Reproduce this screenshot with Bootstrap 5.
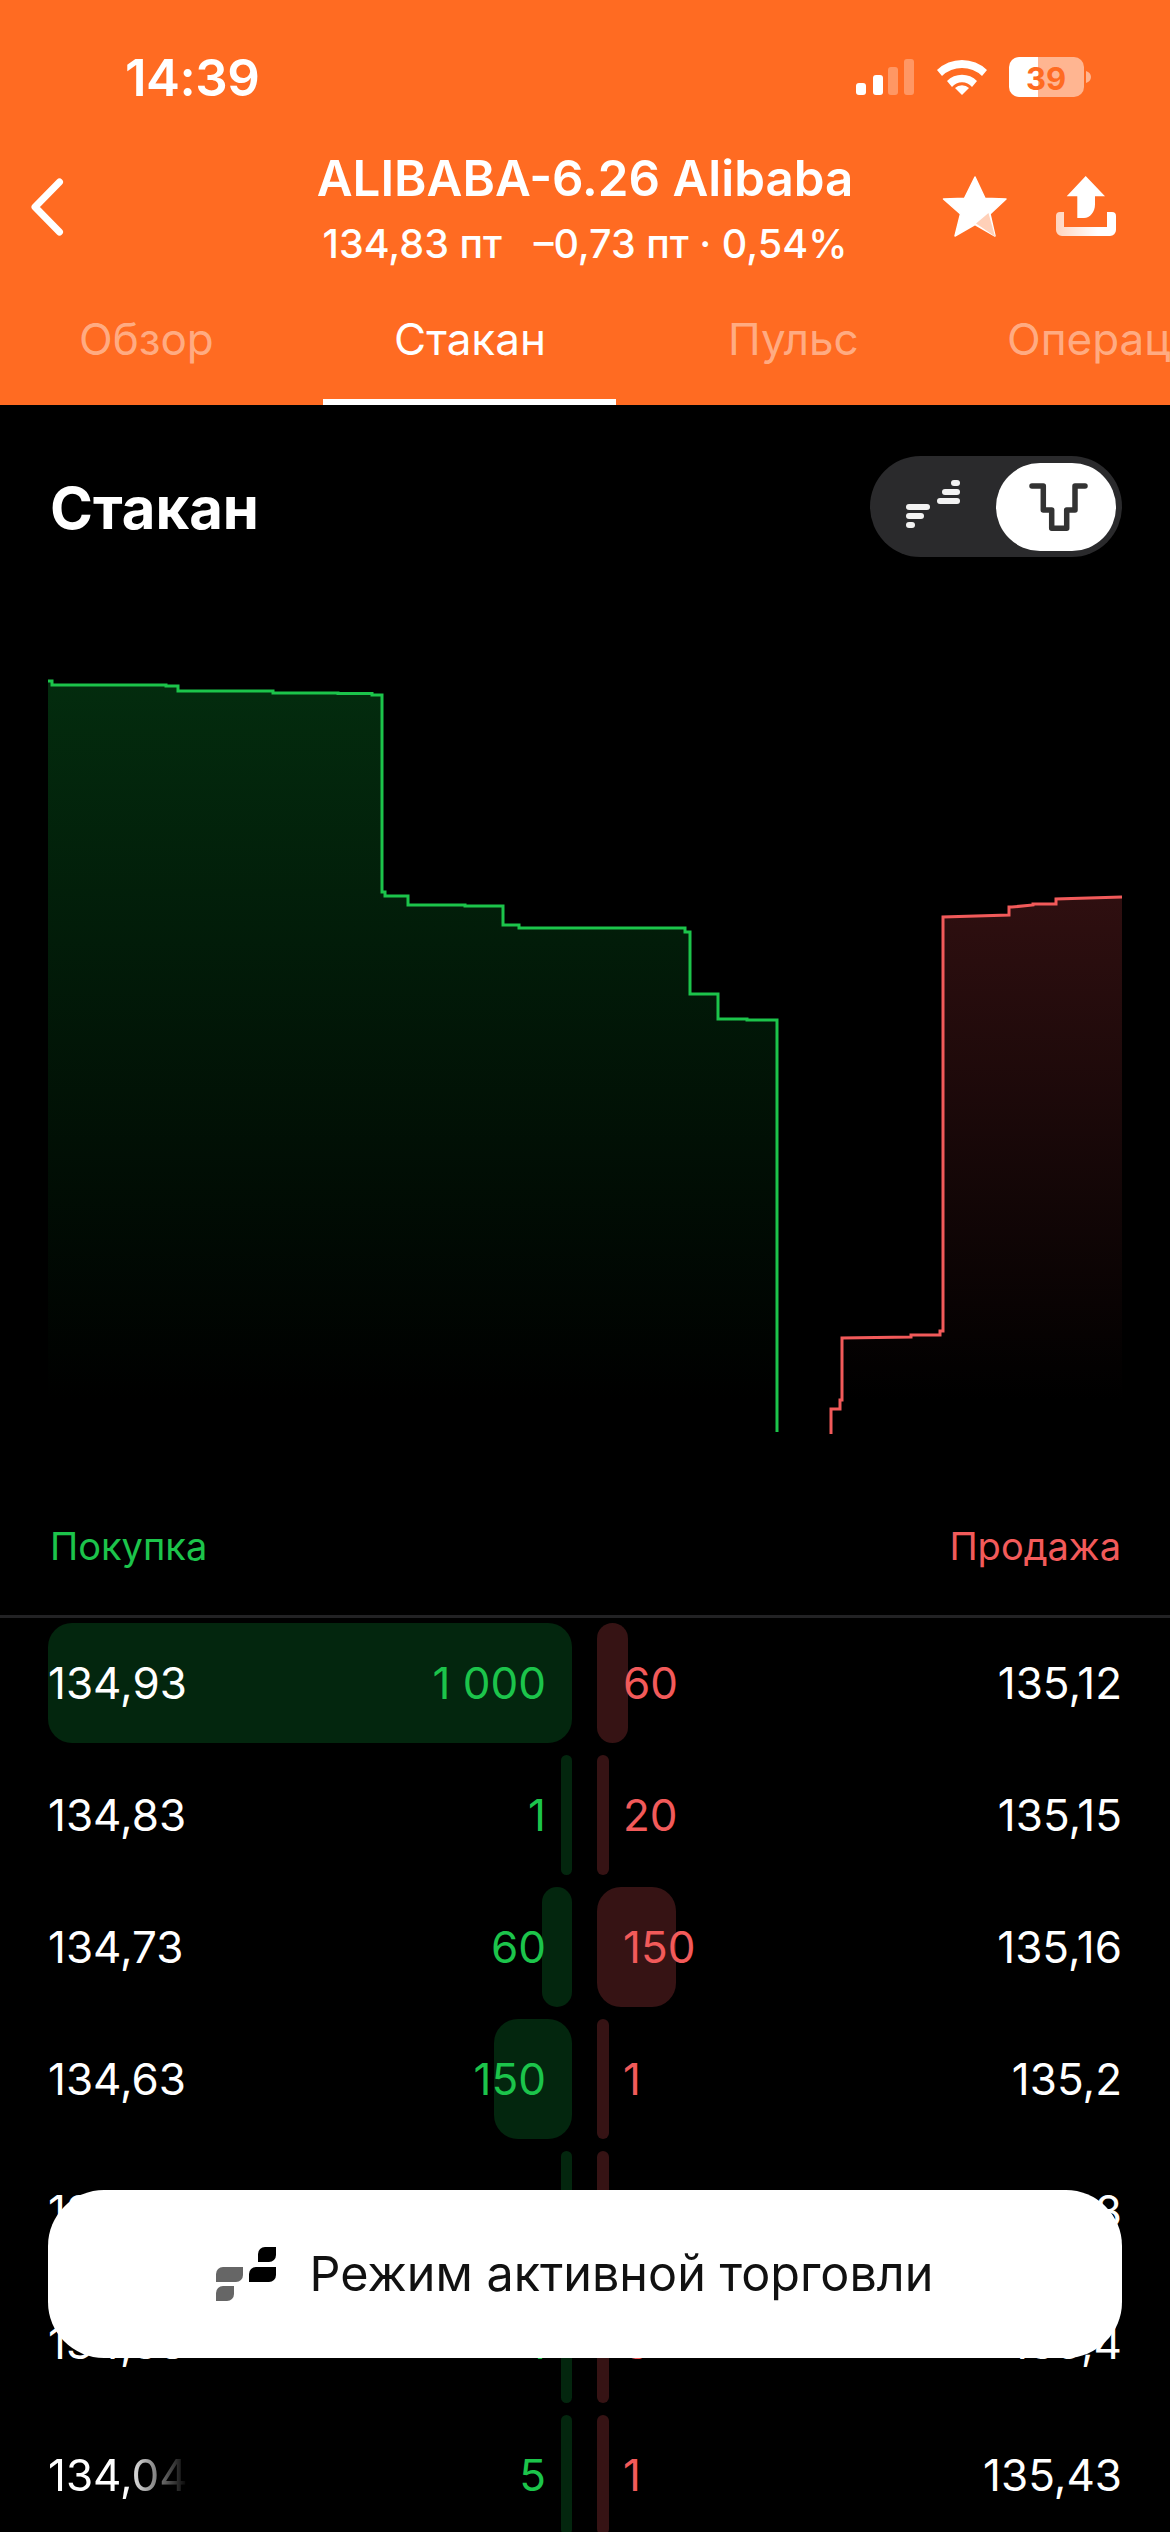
<!DOCTYPE html>
<html lang="ru">
<head>
  <meta charset="UTF-8" />
  <meta name="viewport" content="width=device-width, initial-scale=1.0" />
  <title>Стакан</title>
  <link href="https://cdn.jsdelivr.net/npm/bootstrap@5.3.3/dist/css/bootstrap.min.css" rel="stylesheet" />
  <style>
    html, body { background: #000; }
    body {
      width: 1170px;
      height: 2532px;
      overflow: hidden;
      position: relative;
      font-family: Inter, "Liberation Sans", sans-serif;
      color: #fff;
    }
    .top-head { background: #ff6b22; height: 405px; }
    .status-line { height: 150px; padding: 50px 70px 0 125px; }
    .clock { font-size: 51px; font-weight: 600; line-height: 56px; letter-spacing: -.5px; }
    .title-line { height: 163px; position: relative; }
    .ticker { font-size: 49.3px; font-weight: 600; line-height: 56px; white-space: nowrap; }
    .ticker-sub { font-size: 39.5px; font-weight: 500; line-height: 48px; margin-top: 14px; white-space: pre; }
    .back-ico { position: absolute; left: 28px; top: 20px; }
    .head-ico { position: absolute; top: 24px; }
    .tab-strip { flex-wrap: nowrap; overflow: hidden; height: 92px; position: relative; }
    .tab-strip .nav-link {
      position: absolute; top: 0; padding: 0;
      font-size: 44px; line-height: 52px;
      color: rgba(255, 255, 255, .45);
      white-space: nowrap;
    }
    .tab-strip .nav-link.active { color: #fff; }
    .tab-line { position: absolute; left: 323px; width: 293px; height: 6px; bottom: 0; background: #fff; }
    .depth-head { height: 152px; padding: 51px 48px 0 50px; }
    .depth-title { font-size: 58px; font-weight: 700; line-height: 62px; margin: 21px 0 0; }
    .mode-switch { width: 252px; height: 101px; background: #2a2a2c; border-radius: 51px; }
    .mode-on { position: absolute; left: 126px; top: 7px; width: 120px; height: 88px; background: #fff; border-radius: 44px; }
    .depth-chart { display: block; }
    .side-labels { padding: 0 49px 0 50px; font-size: 38px; line-height: 46px; margin-top: 83px; }
    .buy-txt { color: #1cc44b; }
    .sell-txt { color: #f25a5a; }
    .book-sep { height: 3px; background: #222224; margin-top: 46px; }
    .book { padding-top: 5px; }
    .book-row { height: 120px; margin-bottom: 12px; font-size: 44px; padding-left: 48px; gap: 25px; }
    .book-cell { position: relative; width: 524px; }
    .book-cell span { position: relative; }
    .cell-sell { width: 525px; }
    .bar-buy, .bar-sell { position: absolute; top: 0; bottom: 0; border-radius: 24px; }
    .bar-buy { right: 0; background: #03260e; }
    .bar-sell { left: 0; background: #361314; }
    .qty-buy { padding-right: 26px; }
    .qty-sell { padding-left: 26px; }
    .book-cell .fade-out {
      -webkit-mask-image: linear-gradient(90deg, #000 55%, transparent 100%);
      mask-image: linear-gradient(90deg, #000 55%, transparent 100%);
    }
    .trade-btn {
      position: absolute; left: 48px; top: 2190px;
      width: 1074px; height: 168px;
      padding: 0 21px 0 0;
      background: #fff; color: #111;
      border: 0; border-radius: 56px;
      font-size: 48.5px; line-height: 1;
      gap: 34px;
    }
  </style>
</head>
<body>
  <header class="top-head">
    <div class="status-line d-flex justify-content-between align-items-start">
      <div class="clock">14:39</div>
      <svg width="250" height="55" viewBox="850 50 250 55">
        <g fill="#fff">
          <rect x="856" y="83" width="10" height="12" rx="3"/>
          <rect x="873" y="75" width="10" height="20" rx="3"/>
          <rect x="888" y="67" width="10" height="28" rx="3" opacity=".3"/>
          <rect x="904" y="59" width="10" height="36" rx="3" opacity=".3"/>
          <path d="M937 70a36 36 0 0 1 50 0l-5 6a29 29 0 0 0-40 0z"/>
          <path d="M947 81a21 21 0 0 1 30 0l-5 6a13 13 0 0 0-20 0z"/>
          <path d="M962 95l-7-7a10 10 0 0 1 14 0z"/>
          <path d="M1019 57h19v40h-19a10 10 0 0 1-10-10V67a10 10 0 0 1 10-10z"/>
          <path d="M1038 57h36a10 10 0 0 1 10 10v20a10 10 0 0 1-10 10h-36z" opacity=".5"/>
          <path d="M1086 71c3 1 5 3 5 6s-2 5-5 6z" opacity=".5"/>
        </g>
        <text x="1046" y="90" text-anchor="middle" font-family="Inter, sans-serif" font-size="31" font-weight="700" fill="#ff6b22">39</text>
      </svg>
    </div>
    <div class="title-line text-center">
      <svg class="back-ico" width="40" height="74" viewBox="0 0 40 74" fill="none" stroke="#fff" stroke-width="7" stroke-linecap="round" stroke-linejoin="round">
        <path d="M31.5 12 7 37l24.5 25"/>
      </svg>
      <div class="ticker">ALIBABA-6.26 Alibaba</div>
      <div class="ticker-sub">134,83 пт   –0,73 пт · 0,54%</div>
      <svg class="head-ico" style="left:940px" width="70" height="66" viewBox="940 174 70 66">
        <path fill="#fff" stroke="#fff" stroke-width="1.5" stroke-linejoin="round" d="M975 177l10 21.3 21 .7-16 15 5 22-20-11.500-20 11.500 5.500-22-17-15 21-.7z"/>
        <path fill="#ffd0b8" d="M976 223.500 988.500 213 995 236.500z"/>
      </svg>
      <svg class="head-ico" style="left:1054px" width="64" height="64" viewBox="1054 172 64 64">
        <defs>
          <linearGradient id="trayFill" x1="0" x2="1" y1="0" y2="0">
            <stop offset="0" stop-color="#ffd4be"/><stop offset=".7" stop-color="#fff"/>
          </linearGradient>
        </defs>
        <path fill="#fff" d="M1085.700 174l19.300 20.300h-10v8c0 8-5 13.700-11 13.700h-6.700v-21.700h-10.600z"/>
        <path fill="url(#trayFill)" d="M1056 214a4 4 0 0 1 4-4h4v15h43v-15h5a4 4 0 0 1 4 4v14a6 6 0 0 1-6 6h-48a6 6 0 0 1-6-6z"/>
      </svg>
    </div>
    <nav class="nav tab-strip">
      <a class="nav-link" style="left:79px" href="#">Обзор</a>
      <a class="nav-link active" style="left:394px" href="#">Стакан</a>
      <a class="nav-link" style="left:728px" href="#">Пульс</a>
      <a class="nav-link" style="left:1007px" href="#">Операции</a>
      <div class="tab-line"></div>
    </nav>
  </header>

  <main>
    <div class="depth-head d-flex justify-content-between align-items-start">
      <h1 class="depth-title">Стакан</h1>
      <div class="mode-switch position-relative">
        <svg class="position-absolute" style="left:36px;top:20px" width="56" height="56" viewBox="0 0 56 56" fill="#f2f2f2">
          <rect x="45" y="4" width="9" height="6" rx="3"/>
          <rect x="36" y="13" width="18" height="6" rx="3"/>
          <rect x="31" y="22" width="23" height="6" rx="3"/>
          <rect x="0" y="28" width="24" height="6" rx="3"/>
          <rect x="0" y="37" width="18" height="6" rx="3"/>
          <rect x="0" y="46" width="9" height="6" rx="3"/>
        </svg>
        <div class="mode-on">
          <svg class="position-absolute top-0 start-0" width="120" height="88" viewBox="0 0 120 88" fill="none" stroke="#333" stroke-width="5.500" stroke-linecap="round" stroke-linejoin="round">
            <path d="M36 23h11.300v24h8.400v18.300h15V47H79V23h10"/>
          </svg>
        </div>
      </div>
    </div>

    <svg class="depth-chart" width="1170" height="883" viewBox="0 0 1170 883" id="chart"></svg>

    <div class="side-labels d-flex justify-content-between">
      <span class="buy-txt">Покупка</span>
      <span class="sell-txt">Продажа</span>
    </div>
    <div class="book-sep"></div>

    <div class="book">
      <div class="book-row d-flex">
        <div class="book-cell d-flex justify-content-between align-items-center">
          <div class="bar-buy" style="width:524px"></div>
          <span>134,93</span><span class="buy-txt qty-buy">1 000</span>
        </div>
        <div class="book-cell cell-sell d-flex justify-content-between align-items-center">
          <div class="bar-sell" style="width:31px"></div>
          <span class="sell-txt qty-sell">60</span><span>135,12</span>
        </div>
      </div>
      <div class="book-row d-flex">
        <div class="book-cell d-flex justify-content-between align-items-center">
          <div class="bar-buy" style="width:11px"></div>
          <span>134,83</span><span class="buy-txt qty-buy">1</span>
        </div>
        <div class="book-cell cell-sell d-flex justify-content-between align-items-center">
          <div class="bar-sell" style="width:12px"></div>
          <span class="sell-txt qty-sell">20</span><span>135,15</span>
        </div>
      </div>
      <div class="book-row d-flex">
        <div class="book-cell d-flex justify-content-between align-items-center">
          <div class="bar-buy" style="width:30px"></div>
          <span>134,73</span><span class="buy-txt qty-buy">60</span>
        </div>
        <div class="book-cell cell-sell d-flex justify-content-between align-items-center">
          <div class="bar-sell" style="width:79px"></div>
          <span class="sell-txt qty-sell">150</span><span>135,16</span>
        </div>
      </div>
      <div class="book-row d-flex">
        <div class="book-cell d-flex justify-content-between align-items-center">
          <div class="bar-buy" style="width:78px"></div>
          <span>134,63</span><span class="buy-txt qty-buy">150</span>
        </div>
        <div class="book-cell cell-sell d-flex justify-content-between align-items-center">
          <div class="bar-sell" style="width:12px"></div>
          <span class="sell-txt qty-sell">1</span><span>135,2</span>
        </div>
      </div>
      <div class="book-row d-flex">
        <div class="book-cell d-flex justify-content-between align-items-center">
          <div class="bar-buy" style="width:11px"></div>
          <span>134,53</span><span class="buy-txt qty-buy">1</span>
        </div>
        <div class="book-cell cell-sell d-flex justify-content-between align-items-center">
          <div class="bar-sell" style="width:12px"></div>
          <span class="sell-txt qty-sell">1</span><span>135,38</span>
        </div>
      </div>
      <div class="book-row d-flex">
        <div class="book-cell d-flex justify-content-between align-items-center">
          <div class="bar-buy" style="width:11px"></div>
          <span>134,38</span><span class="buy-txt qty-buy">1</span>
        </div>
        <div class="book-cell cell-sell d-flex justify-content-between align-items-center">
          <div class="bar-sell" style="width:12px"></div>
          <span class="sell-txt qty-sell">3</span><span>135,4</span>
        </div>
      </div>
      <div class="book-row d-flex">
        <div class="book-cell d-flex justify-content-between align-items-center">
          <div class="bar-buy" style="width:11px"></div>
          <span class="fade-out">134,04</span><span class="buy-txt qty-buy">5</span>
        </div>
        <div class="book-cell cell-sell d-flex justify-content-between align-items-center">
          <div class="bar-sell" style="width:12px"></div>
          <span class="sell-txt qty-sell">1</span><span>135,43</span>
        </div>
      </div>
    </div>
  </main>

  <button class="trade-btn d-flex align-items-center justify-content-center" type="button">
    <svg width="60" height="54" viewBox="216 2247 60 54">
      <path fill="#000" d="M258 2254a7 7 0 0 1 7-7h11v8a7 7 0 0 1-7 7h-11z"/>
      <path fill="#000" d="M249 2274a7 7 0 0 1 7-7h20v8a7 7 0 0 1-7 7h-20z"/>
      <path fill="#666" d="M216 2274a7 7 0 0 1 7-7h20v8a7 7 0 0 1-7 7h-20z"/>
      <path fill="#666" d="M216 2293a7 7 0 0 1 7-7h11v8a7 7 0 0 1-7 7h-11z"/>
    </svg>
    <span>Режим активной торговли</span>
  </button>

  <script>
    // стаканный график: точки сняты со скриншота, y считаем от верха svg
    const top0 = 557;
    const buy = [[48,681],[52,681],[52,685],[166,685],[166,686],[178,686],[178,691],[273,691],[273,693],[338,693],[338,693.5],[372,693.5],[372,695],[382,695],[382,892],[385,892],[385,896],[408,896],[408,905],[465,905],[465,906],[503,906],[503,925],[519,925],[519,928],[685,928],[685,932],[690,932],[690,994],[718,994],[718,1019],[747,1019],[747,1020],[777,1020],[777,1432]];
    const sell = [[831,1434],[831,1409],[840,1409],[840,1400],[842,1400],[842,1338],[911,1337],[911,1335],[940,1335],[940,1331],[943,1331],[943,917],[1009,915],[1009,907],[1012,907],[1033,905],[1033,904],[1056,904],[1056,899],[1122,897]];
    const pts = a => a.map(p => p[0] + ',' + (p[1] - top0)).join(' ');
    const fillBuy = pts(buy) + ' 777,' + (1400 - top0) + ' 48,' + (1400 - top0);
    const fillSell = pts(sell.slice(2)) + ' 1122,' + (1400 - top0) + ' 840,' + (1400 - top0);
    document.getElementById('chart').innerHTML = `
      <defs>
        <linearGradient id="gb" gradientUnits="userSpaceOnUse" x1="0" y1="${681 - top0}" x2="0" y2="${1400 - top0}">
          <stop offset="0" stop-color="#032c0e"/><stop offset="1" stop-color="#000"/>
        </linearGradient>
        <linearGradient id="gs" gradientUnits="userSpaceOnUse" x1="0" y1="${897 - top0}" x2="0" y2="${1400 - top0}">
          <stop offset="0" stop-color="#2f0f10"/><stop offset="1" stop-color="#000"/>
        </linearGradient>
      </defs>
      <polygon points="${fillBuy}" fill="url(#gb)"/>
      <polygon points="${fillSell}" fill="url(#gs)"/>
      <polyline points="${pts(buy)}" fill="none" stroke="#1cc44b" stroke-width="3"/>
      <polyline points="${pts(sell)}" fill="none" stroke="#f25a5a" stroke-width="3"/>`;
  </script>
  <script src="https://cdn.jsdelivr.net/npm/bootstrap@5.3.3/dist/js/bootstrap.bundle.min.js"></script>
</body>
</html>
